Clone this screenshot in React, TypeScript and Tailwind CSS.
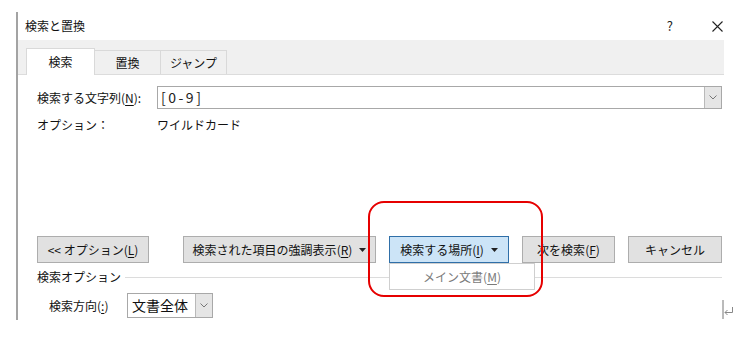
import React from "react";

const font = {
  fontFamily: '"Noto Sans CJK JP", "Noto Sans", sans-serif',
};

function Key({ k }: { k: string }) {
  return (
    <>
      (<span className="underline underline-offset-2">{k}</span>)
    </>
  );
}

function Caret() {
  return (
    <svg width="7" height="4" viewBox="0 0 7 4" className="ml-[7px]">
      <path d="M0 0 L7 0 L3.5 4 Z" fill="#222" />
    </svg>
  );
}

function ChevronBox({ className }: { className: string }) {
  return (
    <div
      className={`flex items-center justify-center bg-[#e5e5e5] border-l border-[#b9b9b9] ${className}`}
    >
      <svg width="8" height="5" viewBox="0 0 8 5">
        <path d="M0.5 0.5 L4 4 L7.5 0.5" fill="none" stroke="#777" strokeWidth="1" />
      </svg>
    </div>
  );
}

function Button({
  children,
  className,
}: {
  children: React.ReactNode;
  className: string;
}) {
  return (
    <div
      className={`h-[27px] flex items-center justify-center bg-[#e1e1e1] border border-[#adadad] text-[12px] text-[#111] ${className}`}
    >
      {children}
    </div>
  );
}

export default function App() {
  return (
    <div className="w-[750px] h-[347px] bg-white relative overflow-hidden" style={font}>
      <div className="ml-[16px] mt-[12px] w-[708px] h-[308px] border-l-2 border-[#a3a3a3] flex flex-col">
        {/* title bar */}
        <div className="h-[28px] flex items-center text-[12px] text-[#111]">
          <span className="ml-[7px]">検索と置換</span>
          <span className="ml-auto mr-[39px] text-[13px] text-[#222]">?</span>
          <svg width="11" height="11" viewBox="0 0 11 11" className="mr-[1px]">
            <path d="M0.5 0.5 L10.5 10.5 M10.5 0.5 L0.5 10.5" stroke="#222" strokeWidth="1.1" />
          </svg>
        </div>

        {/* tab strip */}
        <div className="h-[35px] bg-[#f0f0f0] border-b border-[#dcdcdc] flex items-end pl-[8px]">
          <div className="w-[69px] h-[27px] bg-white border border-b-0 border-[#d9d9d9] flex items-center justify-center text-[12px] text-[#111] -mb-px">
            検索
          </div>
          <div className="w-[66px] h-[24px] border border-l-0 border-b-0 border-[#d9d9d9] flex items-center justify-center text-[12px] text-[#111]">
            置換
          </div>
          <div className="w-[66px] h-[24px] border border-l-0 border-b-0 border-[#d9d9d9] flex items-center justify-center text-[12px] text-[#111]">
            ジャンプ
          </div>
        </div>

        {/* search string row */}
        <div className="mt-[11px] flex items-center pl-[19px] text-[12px] text-[#111]">
          <span className="w-[120px]">
            検索する文字列<Key k="N" />:
          </span>
          <div className="w-[565px] h-[23px] border border-[#a8a8a8] flex items-stretch">
            <span className="flex-1 flex items-center pl-[3px] text-[14px] tracking-[2.5px] text-[#222]">
              [0-9]
            </span>
            <ChevronBox className="w-[17px]" />
          </div>
        </div>

        {/* options row */}
        <div className="mt-[7px] flex items-center pl-[19px] text-[12px] text-[#111]">
          <span className="w-[120px]">オプション：</span>
          <span>ワイルドカード</span>
        </div>

        {/* buttons */}
        <div className="mt-[102px] flex pl-[19px]">
          <Button className="w-[112px]">
            &lt;&lt; オプション<Key k="L" />
          </Button>
          <Button className="w-[193px] ml-[34px]">
            検索された項目の強調表示<Key k="R" />
            <Caret />
          </Button>
          <div className="relative ml-[13px]">
            <div className="w-[120px] h-[27px] flex items-center justify-center bg-[#cce4f7] border border-[#2f6fa8] text-[12px] text-[#111]">
              検索する場所<Key k="I" />
              <Caret />
            </div>
            <div className="absolute left-0 top-[27px] w-[146px] h-[27px] bg-white border border-[#cfcfcf] flex items-center justify-center text-[12px] text-[#7a7a7a] z-10">
              メイン文書<Key k="M" />
            </div>
          </div>
          <Button className="w-[93px] ml-[13px]">
            次を検索<Key k="F" />
          </Button>
          <Button className="w-[94px] ml-[13px]">キャンセル</Button>
        </div>

        {/* search options section */}
        <div className="mt-[5px] flex items-center pl-[19px] text-[12px] text-[#111]">
          <span>検索オプション</span>
          <div className="flex-1 ml-[4px] mr-[2px] h-px bg-[#dcdcdc]" />
        </div>

        <div className="mt-[7px] flex items-center pl-[31px] text-[12px] text-[#111]">
          <span className="w-[78px]">
            検索方向<Key k=":" />
          </span>
          <div className="w-[86px] h-[25px] border border-[#a8a8a8] flex items-stretch">
            <span className="flex-1 flex items-center pl-[4px] text-[14px] text-[#111]">文書全体</span>
            <ChevronBox className="w-[17px]" />
          </div>
        </div>
      </div>

      {/* red highlight */}
      <div className="absolute left-[368px] top-[201px] w-[175px] h-[96px] border-2 border-[#e60000] rounded-[16px] pointer-events-none" />

      {/* cursor + paragraph mark */}
      <svg className="absolute left-[722px] top-[300px]" width="12" height="19" viewBox="0 0 12 19">
        <path d="M1 0 L1 19" stroke="#777" strokeWidth="1" />
        <path d="M10.5 7 L10.5 12.5 L3 12.5 M5.5 10 L3 12.5 L5.5 15" fill="none" stroke="#888" strokeWidth="1" />
      </svg>
    </div>
  );
}
